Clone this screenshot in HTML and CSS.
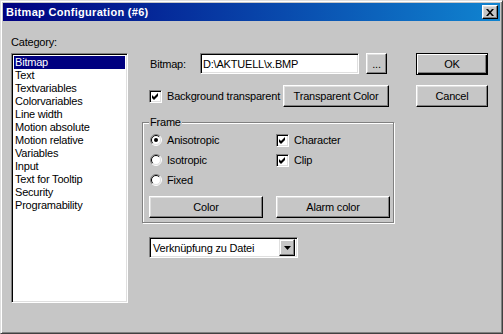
FILE: index.html
```html
<!DOCTYPE html>
<html lang="en">
<head>
    <meta charset="UTF-8">
    <meta name="viewport" content="width=device-width, initial-scale=1.0">
    <title>Bitmap Configuration</title>
    <link rel="stylesheet" href="styles.css">
</head>
<body>

    <div class="window">
        <div class="titlebar">
            <span class="title">Bitmap Configuration (#6)</span>
            <span class="close-btn">
                <svg width="8" height="7" viewBox="0 0 8 7">
                    <path d="M0 0h2l2 2.2L6 0h2L5 3.5 8 7H6L4 4.8 2 7H0l3-3.5z" fill="#000"/>
                </svg>
            </span>
        </div>

        <div class="client">
            <div class="category">
                <div class="caption">Category:</div>
                <ul class="listbox">
                    <li class="selected">Bitmap</li>
                    <li>Text</li>
                    <li>Textvariables</li>
                    <li>Colorvariables</li>
                    <li>Line width</li>
                    <li>Motion absolute</li>
                    <li>Motion relative</li>
                    <li>Variables</li>
                    <li>Input</li>
                    <li>Text for Tooltip</li>
                    <li>Security</li>
                    <li>Programability</li>
                </ul>
            </div>

            <div class="settings">
                <div class="file-row">
                    <span class="file-label">Bitmap:</span>
                    <span class="field file-input">D:\AKTUELL\x.BMP</span>
                    <button class="btn browse-btn" type="button">...</button>
                </div>

                <div class="bg-row">
                    <label class="check-item">
                        <span class="checkbox">
                            <svg width="7" height="7" viewBox="0 0 7 7"><path d="M0 2l2 2 4-4v3L2 7 0 5z" fill="#000"/></svg>
                        </span>
                        Background transparent
                    </label>
                    <button class="btn transparent-btn" type="button">Transparent Color</button>
                </div>

                <div class="group">
                    <span class="group-title">Frame</span>
                    <div class="group-grid">
                        <label class="radio-item">
                            <svg class="radio" width="12" height="12" viewBox="0 0 12 12">
                                <circle cx="6" cy="6" r="5" fill="#fff"/>
                                <path d="M2.1 9.9A5.5 5.5 0 0 1 9.9 2.1" stroke="#808080" fill="none"/>
                                <path d="M2.8 9.2A4.5 4.5 0 0 1 9.2 2.8" stroke="#000" fill="none"/>
                                <path d="M9.9 2.1A5.5 5.5 0 0 1 2.1 9.9" stroke="#fff" fill="none"/>
                                <path d="M9.2 2.8A4.5 4.5 0 0 1 2.8 9.2" stroke="#dfdfdf" fill="none"/>
                                <circle cx="6" cy="6" r="2" fill="#000"/>
                            </svg>
                            Anisotropic
                        </label>
                        <label class="check-item">
                            <span class="checkbox">
                                <svg width="7" height="7" viewBox="0 0 7 7"><path d="M0 2l2 2 4-4v3L2 7 0 5z" fill="#000"/></svg>
                            </span>
                            Character
                        </label>
                        <label class="radio-item">
                            <svg class="radio" width="12" height="12" viewBox="0 0 12 12">
                                <circle cx="6" cy="6" r="5" fill="#fff"/>
                                <path d="M2.1 9.9A5.5 5.5 0 0 1 9.9 2.1" stroke="#808080" fill="none"/>
                                <path d="M2.8 9.2A4.5 4.5 0 0 1 9.2 2.8" stroke="#000" fill="none"/>
                                <path d="M9.9 2.1A5.5 5.5 0 0 1 2.1 9.9" stroke="#fff" fill="none"/>
                                <path d="M9.2 2.8A4.5 4.5 0 0 1 2.8 9.2" stroke="#dfdfdf" fill="none"/>
                            </svg>
                            Isotropic
                        </label>
                        <label class="check-item">
                            <span class="checkbox">
                                <svg width="7" height="7" viewBox="0 0 7 7"><path d="M0 2l2 2 4-4v3L2 7 0 5z" fill="#000"/></svg>
                            </span>
                            Clip
                        </label>
                        <label class="radio-item">
                            <svg class="radio" width="12" height="12" viewBox="0 0 12 12">
                                <circle cx="6" cy="6" r="5" fill="#fff"/>
                                <path d="M2.1 9.9A5.5 5.5 0 0 1 9.9 2.1" stroke="#808080" fill="none"/>
                                <path d="M2.8 9.2A4.5 4.5 0 0 1 9.2 2.8" stroke="#000" fill="none"/>
                                <path d="M9.9 2.1A5.5 5.5 0 0 1 2.1 9.9" stroke="#fff" fill="none"/>
                                <path d="M9.2 2.8A4.5 4.5 0 0 1 2.8 9.2" stroke="#dfdfdf" fill="none"/>
                            </svg>
                            Fixed
                        </label>
                        <span></span>
                        <button class="btn wide-btn" type="button">Color</button>
                        <button class="btn wide-btn" type="button">Alarm color</button>
                    </div>
                </div>

                <div class="field dropdown">
                    <span>Verknüpfung zu Datei</span>
                    <span class="drop-btn">
                        <svg width="7" height="4" viewBox="0 0 7 4"><path d="M0 0h7L3.5 4z" fill="#000"/></svg>
                    </span>
                </div>
            </div>

            <div class="actions">
                <button class="btn default-btn" type="button">OK</button>
                <button class="btn" type="button">Cancel</button>
            </div>
        </div>
    </div>

</body>
</html>
```

FILE: styles.css
```css
* {
    box-sizing: border-box;
}

body {
    margin: 0;
    font-family: "Liberation Sans", Arial, sans-serif;
    font-size: 11px;
    letter-spacing: -0.2px;
    color: #000;
    background-color: #c6c6c6;
}

.window {
    width: 503px;
    height: 334px;
    padding: 2px;
    border: 1px solid;
    border-color: #dfdfdf #404040 #404040 #dfdfdf;
    box-shadow: inset 1px 1px #fff, inset -1px -1px #808080;
    background-color: #c6c6c6;
}

.titlebar {
    height: 18px;
    display: flex;
    align-items: center;
    justify-content: space-between;
    padding: 0 2px 0 3px;
    background: linear-gradient(to right, #000080, #1084d0);
    color: white;
}

.title {
    font-weight: bold;
    letter-spacing: 0.3px;
}

.close-btn {
    width: 16px;
    height: 14px;
    display: flex;
    align-items: center;
    justify-content: center;
    background-color: #c6c6c6;
    border: 1px solid;
    border-color: #fff #000 #000 #fff;
    box-shadow: inset -1px -1px #808080, inset 1px 1px #dfdfdf;
}

.client {
    display: flex;
    align-items: flex-start;
}

/* left column */
.category {
    width: 117px;
    margin: 15px 0 0 8px;
}

.caption {
    line-height: 13px;
}

.field {
    background-color: white;
    border: 1px solid;
    border-color: #808080 #fff #fff #808080;
    box-shadow: inset 1px 1px #000, inset -1px -1px #dfdfdf;
}

.listbox {
    list-style: none;
    margin: 4px 0 0;
    padding: 2px 2px;
    height: 250px;
    background-color: white;
    border: 1px solid;
    border-color: #808080 #fff #fff #808080;
    box-shadow: inset 1px 1px #000, inset -1px -1px #dfdfdf;
}

.listbox li {
    height: 13px;
    line-height: 13px;
    padding-left: 1px;
}

.listbox .selected {
    background-color: #000080;
    color: white;
}

/* middle column */
.settings {
    width: 255px;
    margin: 32px 0 0 14px;
}

.file-row {
    display: flex;
    align-items: center;
    height: 21px;
}

.file-label {
    width: 58px;
    padding-left: 8px;
}

.file-input {
    width: 159px;
    height: 21px;
    display: flex;
    align-items: center;
    padding-left: 2px;
}

.btn {
    font: inherit;
    letter-spacing: inherit;
    color: #000;
    padding: 0;
    background-color: #c6c6c6;
    border: 1px solid;
    border-color: #fff #000 #000 #fff;
    box-shadow: inset -1px -1px #808080, inset 1px 1px #dfdfdf;
    cursor: pointer;
}

.browse-btn {
    width: 21px;
    height: 21px;
    margin-left: 7px;
}

.bg-row {
    display: flex;
    align-items: center;
    width: 247px;
    height: 22px;
    margin-top: 11px;
    padding-left: 7px;
}

.transparent-btn {
    width: 106px;
    height: 22px;
    margin-left: auto;
}

.check-item,
.radio-item {
    display: flex;
    align-items: center;
    gap: 5px;
}

.radio-item {
    margin-left: 1px;
}

.checkbox {
    width: 13px;
    height: 13px;
    display: flex;
    align-items: center;
    justify-content: center;
    background-color: white;
    border: 1px solid;
    border-color: #808080 #fff #fff #808080;
    box-shadow: inset 1px 1px #000, inset -1px -1px #dfdfdf;
}

.group {
    position: relative;
    width: 252px;
    height: 101px;
    margin-top: 15px;
    padding: 7px 0 0 6px;
    border: 1px solid #808080;
    box-shadow: 1px 1px #fff, inset 1px 1px #fff;
}

.group-title {
    position: absolute;
    top: -7px;
    left: 6px;
    padding: 0 1px;
    line-height: 13px;
    background-color: #c6c6c6;
}

.group-grid {
    display: grid;
    grid-template-columns: 127px 114px;
    grid-template-rows: 20px 20px 20px 28px;
}

.wide-btn {
    width: 114px;
    height: 22px;
    align-self: end;
    justify-self: start;
}

.dropdown {
    width: 149px;
    height: 21px;
    margin: 14px 0 0 7px;
    display: flex;
    align-items: center;
    justify-content: space-between;
    padding: 2px 2px 2px 3px;
}

.drop-btn {
    width: 16px;
    height: 17px;
    display: flex;
    align-items: center;
    justify-content: center;
    background-color: #c6c6c6;
    border: 1px solid;
    border-color: #dfdfdf #000 #000 #dfdfdf;
    box-shadow: inset -1px -1px #808080, inset 1px 1px #fff;
}

/* right column */
.actions {
    width: 72px;
    margin: 32px 0 0 19px;
    display: flex;
    flex-direction: column;
    gap: 10px;
}

.actions .btn {
    height: 22px;
}

.default-btn {
    border-color: #000;
    box-shadow: inset 1px 1px #fff, inset -1px -1px #000, inset -2px -2px #808080;
}
```
